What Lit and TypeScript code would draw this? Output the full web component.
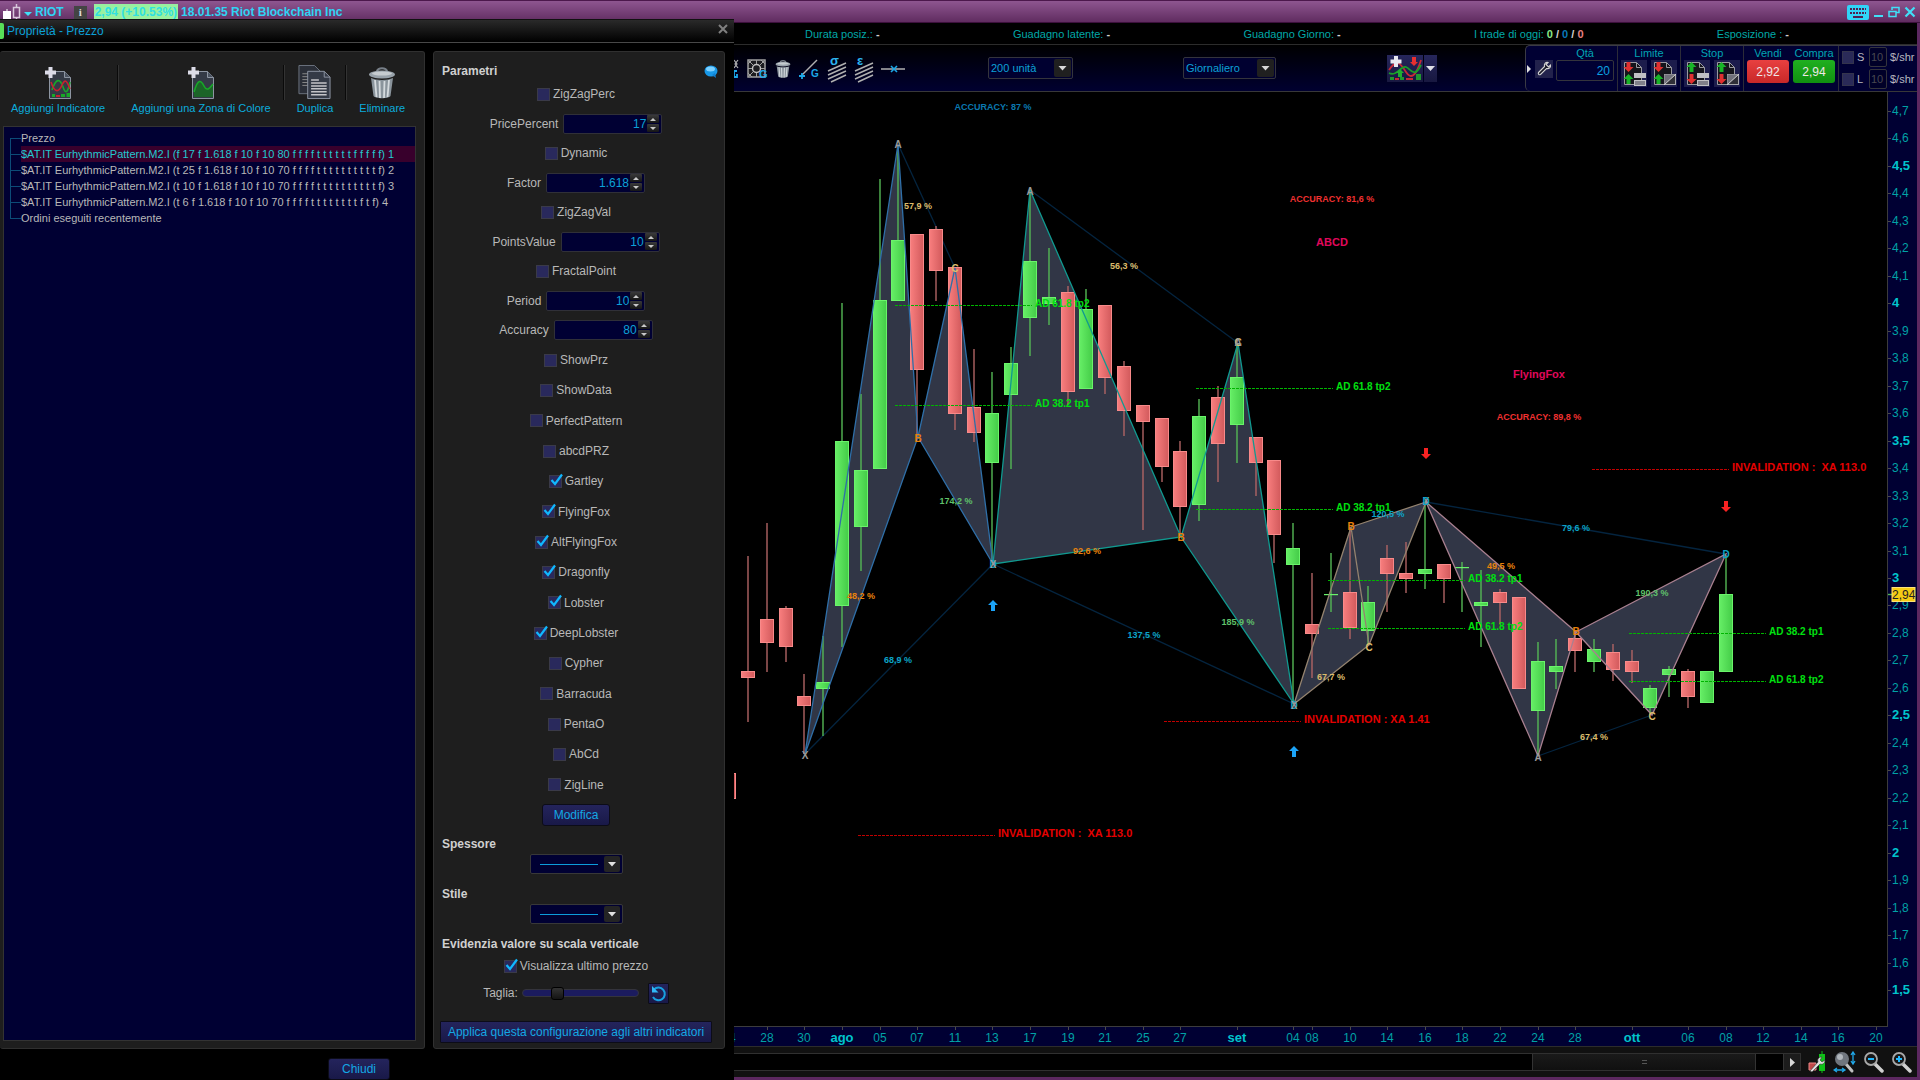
import { LitElement, html, svg, css, nothing } from "lit";
import { customElement, property } from "lit/decorators.js";

type Candle = [slot: number, open: "u" | "d", top: number, bottom: number, high: number, low: number];
type Pt = [number, number];

const FIRST_X = 842;
const PITCH = 18.8;
const slotX = (i: number) => Math.round(FIRST_X + i * PITCH);
const priceY = (p: number) => Math.round(111 + (4.7 - p) * 274.7);

const CANDLES: Candle[] = [
  [-6, "d", 773, 799, 773, 799], [-5, "d", 671, 678, 556, 722], [-4, "d", 619, 643, 523, 672],
  [-3, "d", 608, 647, 606, 662], [-2, "d", 696, 706, 674, 754], [-1, "u", 682, 689, 636, 736],
  [0, "u", 441, 606, 303, 647], [1, "u", 470, 527, 394, 571], [2, "u", 300, 469, 179, 469],
  [3, "u", 240, 301, 145, 301], [4, "d", 234, 370, 234, 437], [5, "d", 229, 271, 226, 301],
  [6, "d", 267, 414, 267, 430], [7, "d", 407, 433, 349, 442], [8, "u", 413, 463, 372, 562],
  [9, "u", 363, 395, 347, 469], [10, "u", 261, 318, 190, 356], [11, "u", 297, 304, 248, 325],
  [12, "d", 292, 392, 286, 405], [13, "u", 309, 389, 289, 389], [14, "d", 305, 378, 305, 394],
  [15, "d", 366, 411, 361, 436], [16, "d", 405, 422, 405, 530], [17, "d", 418, 467, 418, 482],
  [18, "d", 451, 507, 441, 537], [19, "u", 416, 505, 399, 521], [20, "d", 397, 444, 386, 482],
  [21, "u", 377, 425, 343, 463], [22, "d", 437, 463, 437, 496], [23, "d", 460, 535, 460, 563],
  [24, "u", 548, 565, 523, 704], [25, "d", 624, 634, 573, 678], [26, "u", 594, 595, 553, 612],
  [27, "d", 592, 628, 527, 639], [28, "u", 602, 631, 586, 645], [29, "d", 558, 574, 545, 612],
  [30, "d", 573, 579, 542, 593], [31, "u", 569, 574, 502, 589], [32, "d", 564, 579, 564, 603],
  [33, "u", 567, 568, 562, 612], [34, "u", 602, 606, 570, 647], [35, "d", 592, 603, 589, 624],
  [36, "d", 597, 689, 597, 689], [37, "u", 661, 711, 642, 756], [38, "u", 666, 672, 639, 689],
  [39, "d", 638, 651, 631, 672], [40, "u", 649, 662, 639, 672], [41, "d", 652, 670, 644, 681],
  [42, "d", 661, 672, 650, 683], [43, "u", 688, 708, 685, 715], [44, "u", 669, 675, 666, 697],
  [45, "d", 671, 697, 669, 708], [46, "u", 671, 703, 671, 703], [47, "u", 594, 672, 555, 672],
];

const PATTERNS: { cls: string; tris: Pt[][]; lines: Pt[][] }[] = [
  {
    cls: "blue",
    tris: [[[805, 754], [898, 144], [918, 437]], [[918, 437], [955, 268], [993, 564]]],
    lines: [[[805, 754], [898, 144], [918, 437], [805, 754]], [[918, 437], [955, 268], [993, 564], [918, 437]]],
  },
  {
    cls: "teal",
    tris: [[[993, 564], [1030, 190], [1181, 537]], [[1181, 537], [1238, 343], [1294, 704]]],
    lines: [[[993, 564], [1030, 190], [1181, 537], [993, 564]], [[1181, 537], [1238, 343], [1294, 704], [1181, 537]]],
  },
  {
    cls: "tan",
    tris: [[[1294, 704], [1351, 527], [1369, 645]], [[1351, 527], [1426, 502], [1369, 645]]],
    lines: [[[1294, 704], [1351, 527], [1369, 645], [1294, 704]], [[1351, 527], [1426, 502], [1369, 645]]],
  },
  {
    cls: "rose",
    tris: [[[1426, 502], [1538, 756], [1576, 632]], [[1576, 632], [1652, 715], [1726, 554]]],
    lines: [[[1426, 502], [1538, 756], [1576, 632], [1426, 502]], [[1576, 632], [1652, 715], [1726, 554], [1576, 632]]],
  },
];

const RATIOS: Pt[][] = [
  [[898, 144], [955, 268]], [[805, 754], [993, 564]], [[1030, 190], [1238, 343]],
  [[993, 564], [1294, 704]], [[1426, 502], [1726, 554]], [[1538, 756], [1652, 715]],
];

const NOTES: [string, number, number, string][] = [
  ["57,9 %", 918, 206, "sand"], ["56,3 %", 1124, 266, "sand"], ["174,2 %", 956, 501, "leaf"],
  ["48,2 %", 861, 596, "amber"], ["68,9 %", 898, 660, "cyan"], ["92,6 %", 1087, 551, "amber"],
  ["137,5 %", 1144, 635, "cyan"], ["185,9 %", 1238, 622, "leaf"], ["120,5 %", 1388, 514, "cyan"],
  ["67,7 %", 1331, 677, "sand"], ["79,6 %", 1576, 528, "cyan"], ["49,5 %", 1501, 566, "amber"],
  ["190,3 %", 1652, 593, "leaf"], ["67,4 %", 1594, 737, "sand"],
  ["ACCURACY: 87 %", 993, 107, "sea"], ["ACCURACY: 81,6 %", 1332, 199, "red"], ["ACCURACY: 89,8 %", 1539, 417, "red"],
];

const MARKS: [string, number, number, string][] = [
  ["A", 898, 144, "grey"], ["B", 918, 438, "amber"], ["C", 955, 268, "sand"], ["X", 805, 755, "grey"],
  ["D", 993, 564, "cyan"], ["X", 993, 564, "grey"], ["A", 1030, 191, "grey"], ["B", 1181, 537, "amber"],
  ["C", 1238, 342, "sand"], ["A", 1238, 342, "grey"], ["D", 1294, 705, "cyan"], ["X", 1294, 705, "grey"],
  ["B", 1351, 526, "amber"], ["C", 1369, 647, "sand"], ["X", 1426, 501, "grey"], ["D", 1426, 501, "cyan"],
  ["A", 1538, 757, "grey"], ["B", 1576, 631, "amber"], ["C", 1652, 716, "sand"], ["D", 1726, 554, "cyan"],
];

const LEVELS: [string, number, number, string][] = [
  ["AD 61.8 tp2", 895, 305, "target"], ["AD 38.2 tp1", 895, 405, "target"],
  ["AD 61.8 tp2", 1196, 388, "target"], ["AD 38.2 tp1", 1196, 509, "target"],
  ["AD 38.2 tp1", 1328, 580, "target"], ["AD 61.8 tp2", 1328, 628, "target"],
  ["AD 38.2 tp1", 1629, 633, "target"], ["AD 61.8 tp2", 1629, 681, "target"],
  ["INVALIDATION :\u00a0 XA 113.0", 1592, 469, "invalid"], ["INVALIDATION :\u00a0 XA 113.0", 858, 835, "invalid"],
  ["INVALIDATION : XA 1.41", 1164, 721, "invalid"],
];

const DATES: [string, number][] = [
  ["24", -6], ["28", -4], ["30", -2], ["ago", 0], ["05", 2], ["07", 4], ["11", 6], ["13", 8], ["17", 10], ["19", 12],
  ["21", 14], ["25", 16], ["27", 18], ["set", 21], ["04", 24], ["08", 25], ["10", 27], ["14", 29], ["16", 31],
  ["18", 33], ["22", 35], ["24", 37], ["28", 39], ["ott", 42], ["06", 45], ["08", 47], ["12", 49], ["14", 51],
  ["16", 53], ["20", 55],
];

const join = (p: Pt[]) => p.map((q) => q.join(",")).join(" ");

@customElement("price-chart")
class PriceChart extends LitElement {
  static styles = css`
    :host { display: block; background: #000; }
    .canvas { display: block; width: 100%; font-family: "Liberation Sans", Arial, sans-serif; }
    .axis { fill: #000033; }
    .edge { stroke: #3c3c3c; fill: none; shape-rendering: crispEdges; }
    .tick { stroke: #4a4a4a; shape-rendering: crispEdges; }
    .scale { fill: #00a2a6; font-size: 12px; }
    .scale-major { fill: #00c4cc; font-size: 13px; font-weight: 700; }
    .mid { text-anchor: middle; }
    .zone { fill: #313646; }
    .wick { stroke-width: 1.4; }
    .wick-u { stroke: #55b855; }
    .wick-d { stroke: #b06464; }
    .body-u { fill: url(#up); stroke: #6af46a; stroke-width: 1; }
    .body-d { fill: url(#down); stroke: #f88a8a; stroke-width: 1; }
    .leg { fill: none; stroke-width: 1.3; }
    .blue { stroke: #2f6fa8; }
    .teal { stroke: #109a90; }
    .tan { stroke: #94836f; }
    .rose { stroke: #a98090; }
    .ratio { stroke: #04243f; stroke-width: 1.3; }
    .note { font-size: 9px; font-weight: 700; text-anchor: middle; }
    .mark { font-size: 10px; font-weight: 700; text-anchor: middle; }
    .sand { fill: #dcbc6c; }
    .leaf { fill: #5fc06a; }
    .amber { fill: #e8820c; }
    .cyan { fill: #0ca4c8; }
    .sea { fill: #0a78b0; }
    .red { fill: #f03030; }
    .grey { fill: #9a9a9a; }
    .title { fill: #e0085c; font-size: 11px; font-weight: 700; text-anchor: middle; }
    .level { font-size: 10px; font-weight: 700; }
    .target { fill: #00e010; }
    .invalid { fill: #e40000; }
    .level.invalid { font-size: 11px; }
    .level-line { stroke-dasharray: 3 1; stroke-width: 1; shape-rendering: crispEdges; }
    .line-target { stroke: #00b400; }
    .line-invalid { stroke: #c00000; }
    .buy { fill: #1ca4f8; }
    .sell { fill: #f82222; }
    .tag { fill: #f6cc14; stroke: #fbe27a; }
    .tag-text { fill: #222; font-size: 12px; }
  `;

  private candle([i, dir, top, bottom, high, low]: Candle) {
    const x = slotX(i);
    return svg`<line class="wick wick-${dir}" x1=${x} x2=${x} y1=${high} y2=${low}></line>
      <rect class="body-${dir}" x=${x - 6.5} y=${top + 0.5} width="13" height=${Math.max(bottom - top - 1, 0.2)}></rect>`;
  }

  render() {
    const prices = Array.from({ length: 33 }, (_, n) => (47 - n) / 10);
    return html`<svg class="canvas" viewBox="734 92 1183 954" preserveAspectRatio="xMinYMin meet" role="img" aria-label="RIOT">
      <defs>
        <linearGradient id="up"><stop offset="0" stop-color="#66ee66"/><stop offset="1" stop-color="#44cc48"/></linearGradient>
        <linearGradient id="down"><stop offset="0" stop-color="#f87e7e"/><stop offset="1" stop-color="#d25a5c"/></linearGradient>
      </defs>
      ${PATTERNS.map((p) => p.tris.map((t) => svg`<polygon class="zone" points=${join(t)}></polygon>`))}
      ${RATIOS.map((r) => svg`<line class="ratio" x1=${r[0][0]} y1=${r[0][1]} x2=${r[1][0]} y2=${r[1][1]}></line>`)}
      ${CANDLES.map((c) => this.candle(c))}
      ${PATTERNS.map((p) => p.lines.map((l) => svg`<polyline class="leg ${p.cls}" points=${join(l)}></polyline>`))}
      ${LEVELS.map(([text, x, y, kind]) => svg`
        <line class="level-line line-${kind}" x1=${x} x2=${x + 137} y1=${y + 0.5} y2=${y + 0.5}></line>
        <text class="level ${kind}" x=${x + 140} y=${y + 2}>${text}</text>`)}
      ${NOTES.map(([text, x, y, c]) => svg`<text class="note ${c}" x=${x} y=${y + 3}>${text}</text>`)}
      ${MARKS.map(([text, x, y, c]) => svg`<text class="mark ${c}" x=${x} y=${y + 4}>${text}</text>`)}
      <text class="title" x="1332" y="246">ABCD</text>
      <text class="title" x="1539" y="378">FlyingFox</text>
      <path class="buy" d="M993 600l5 5h-3v6h-4v-6h-3z"/>
      <path class="buy" d="M1294 746l5 5h-3v6h-4v-6h-3z"/>
      <path class="sell" d="M1424 448h4v6h3l-5 5l-5-5h3z"/>
      <path class="sell" d="M1724 501h4v6h3l-5 5l-5-5h3z"/>
      <rect class="axis" x="1888" y="92" width="29" height="954"></rect>
      <rect class="axis" x="734" y="1027" width="1183" height="19"></rect>
      <path class="edge" d="M734 1026.5H1887.5V92"></path>
      ${prices.map((p) => {
        const y = priceY(p);
        const major = Number.isInteger(p * 2);
        return svg`<line class="tick" x1="1888" x2="1891" y1=${y} y2=${y}></line>
          <text class=${major ? "scale-major" : "scale"} x="1892" y=${y + 4}>${String(p).replace(".", ",")}</text>`;
      })}
      ${DATES.map(([d, i]) => svg`<line class="tick" x1=${slotX(i)} x2=${slotX(i)} y1="1027" y2="1030"></line>
        <text class="mid ${/\d/.test(d) ? "scale" : "scale-major"}" x=${slotX(i)} y="1042">${d}</text>`)}
      <line class="wick wick-u" x1="1888" x2="1892" y1="594.5" y2="594.5"></line>
      <rect class="tag" x="1892" y="587.5" width="23" height="14"></rect>
      <text class="tag-text" x="1892" y="599">2,94</text>
    </svg>`;
  }
}

const docIcon = (inner: unknown) => html`<svg class="ico" width="32" height="34" viewBox="0 0 32 34">
  <path d="M7.500 5.500h15l6 6v21h-21z" fill="#343a46" stroke="#8d95a2"/><path d="M22.500 5.500v6h6" fill="#4a525f" stroke="#8d95a2"/>
  ${inner}<path d="M6.500 1h4v3.500H14v4h-3.500V12h-4V8.500H3v-4h3.500z" fill="#dcdce8"/></svg>`;

const trashIcon = (w: number, h: number) => html`<svg width=${w} height=${h} viewBox="0 0 28 34">
  <path d="M9 6C9 1 19 1 19 6" fill="none" stroke="#777f88" stroke-width="2.200"/>
  <ellipse cx="14" cy="8.500" rx="13" ry="4" fill="#98a2aa"/><ellipse cx="14" cy="7.500" rx="10" ry="2" fill="#c6ccd0"/>
  <path d="M3 12l2.500 18c2 3 15 3 17 0L25 12c-5 2.500-17 2.500-22 0z" fill="#8a949c"/>
  <path d="M7 14l1.500 17M11.500 15l.5 17M16.500 15l-.5 17M21 14l-1.500 17" stroke="#d4dade" stroke-width="1.800"/></svg>`;

@customElement("props-dialog")
class PropsDialog extends LitElement {
  @property({ attribute: false }) selected = 1;

  static styles = css`
    :host { display: flex; flex-direction: column; background: #000; color: #b8b8b8; font: 12px/16px "Liberation Sans", Arial, sans-serif; }
    * { box-sizing: border-box; }
    button, input, select { font: inherit; margin: 0; }
    .caption { display: flex; align-items: center; height: 24px; background: linear-gradient(#2a2a2a, #000); border-top: 1px solid #111; border-bottom: 1px solid #484848; color: #0ca0d8; }
    .chip { width: 4px; height: 16px; background: #58e058; border-radius: 0 2px 2px 0; margin-right: 3px; }
    .name { flex: 1; font: inherit; margin: 0; }
    .close { background: none; border: 0; padding: 0; width: 22px; height: 20px; }
    .ico { display: block; }
    .panels { flex: 1; display: grid; grid-template-columns: 425px 292px; gap: 8px; padding: 8px 9px 0 0; min-height: 0; }
    .panel { background: #1e1e1e; border: 1px solid #303030; border-radius: 3px; display: flex; flex-direction: column; }
    .list-panel { border-left: 0; padding: 12px 8px 7px 3px; }
    .tools { display: flex; margin-bottom: 10px; padding-top: 1px; font-size: 11px; }
    .tool { display: flex; flex-direction: column; align-items: center; background: none; border: 0; color: #0cacdc; padding: 0 12px; line-height: 16px; white-space: nowrap; }
    .tool:first-child { padding-left: 8px; }
    .art { height: 35px; display: grid; place-items: center; }
    .rule { width: 2px; height: 35px; border-left: 1px solid #0a0a0a; border-right: 1px solid #333; flex: none; }
    .tree { flex: 1; margin: 0; padding: 3px 0; list-style: none; background: #000033; border: 1px solid #333; font-size: 11px; }
    .node { display: flex; height: 16px; padding-left: 6px; white-space: nowrap; }
    .node::before { content: ""; width: 11px; flex: none; background: linear-gradient(#0c4c78, #0c4c78) 0 8px / 11px 1px no-repeat, linear-gradient(#0c4c78, #0c4c78) 0 0 / 1px 100% no-repeat; }
    .node:first-child::before { background: linear-gradient(#0c4c78, #0c4c78) 0 8px / 11px 1px no-repeat, linear-gradient(#0c4c78, #0c4c78) 0 8px / 1px 8px no-repeat; }
    .node:last-child::before { background: linear-gradient(#0c4c78, #0c4c78) 0 8px / 11px 1px no-repeat, linear-gradient(#0c4c78, #0c4c78) 0 0 / 1px 8px no-repeat; }
    .node-text { flex: 1; }
    .node.on .node-text { background: #38002c; color: #24c8d0; }
    .form { padding: 11px 12px 5px 6px; }
    .head { display: flex; justify-content: space-between; align-items: center; height: 16px; margin: 0 -6px 0 0; padding: 0 0 0 2px; font-size: 12px; font-weight: 700; color: #d0d0d0; white-space: nowrap; }
    .row { display: flex; align-items: center; justify-content: center; height: 30px; gap: 3px; }
    .row.num { height: 29px; gap: 5px; }
    .options { flex: 1; display: grid; grid-auto-rows: 1fr; padding-top: 1px; }
    .options .row { height: auto; }
    .tickbox { display: grid; width: 13px; height: 13px; flex: none; }
    .tickbox > * { grid-area: 1 / 1; }
    .tickbox input { appearance: none; width: 13px; height: 13px; background: #29295c; border: 1px solid #3a3a48; }
    .tickmark { width: 15px; height: 13px; margin-top: -2px; pointer-events: none; overflow: visible; z-index: 1; }
    .spin { display: flex; align-items: center; width: 99px; height: 20px; background: #000033; border: 1px solid #303038; border-radius: 2px; padding-right: 2px; }
    .spin input { flex: 1; min-width: 0; background: none; border: 0; padding: 0; text-align: right; color: #0ca0d8; appearance: textfield; outline: none; }
    .spin input::-webkit-inner-spin-button { appearance: none; display: none; }
    .arrows { display: flex; flex-direction: column; gap: 1px; margin-left: 1px; }
    .step { display: grid; place-items: center; width: 12px; height: 8px; padding: 0; border: 0; border-radius: 1px; background: linear-gradient(#3a3a3a, #161616); }
    .btn { background: linear-gradient(#24245c, #191948); border: 1px solid #0c0c18; border-radius: 3px; color: #14a8e4; height: 22px; padding: 0 13px; line-height: 16px; white-space: nowrap; }
    .modify { align-self: center; margin: 4px 0 10px; padding: 0 11px; }
    .combo { align-self: center; display: grid; width: 93px; height: 20px; margin: 2px 0 12px; }
    .combo > * { grid-area: 1 / 1; }
    .combo select { appearance: none; background: #000033; border: 1px solid #383838; border-radius: 2px; color: transparent; width: 93px; height: 20px; padding: 0; }
    .combo svg { pointer-events: none; }
    .size { height: 22px; gap: 4px; margin: 8px 0 17px; }
    .check-last { height: 16px; margin-top: 6px; }
    .slider { appearance: none; width: 117px; height: 8px; background: #1b1b5e; border: 1px solid #34343c; border-radius: 4px; margin-right: 5px; }
    .slider::-webkit-slider-thumb { appearance: none; width: 13px; height: 13px; border: 1px solid #000; border-radius: 3px; background: linear-gradient(#333, #141414); }
    .reset { display: grid; place-items: center; width: 21px; height: 21px; padding: 0; border-radius: 1px; }
    .apply { align-self: stretch; padding: 0; border-radius: 1px; }
    .foot { display: flex; justify-content: center; padding: 9px 16px 0 0; }
  `;

  private check(name: string, on = false, cls = "row") {
    const id = "c-" + name.replace(/\s/g, "");
    return html`<div class=${cls}><span class="tickbox"><input type="checkbox" id=${id} .checked=${on}>${on
      ? html`<svg class="tickmark" viewBox="0 0 15 13"><path d="M2.500 7L6 11L13 1.500" fill="none" stroke="#10b8ff" stroke-width="2.200"/></svg>`
      : nothing}</span><label for=${id}>${name}</label></div>`;
  }

  private num(name: string, value: string) {
    return html`<div class="row num"><label for=${name}>${name}</label><span class="spin">
      <input type="number" step="any" id=${name} .value=${value}>
      <span class="arrows">
        <button class="step" type="button" aria-label="+"><svg width="6" height="3" viewBox="0 0 6 3"><path d="M3 0l3 3H0z" fill="#c8c8c8"/></svg></button>
        <button class="step" type="button" aria-label="-"><svg width="6" height="3" viewBox="0 0 6 3"><path d="M0 0h6L3 3z" fill="#c8c8c8"/></svg></button>
      </span></span></div>`;
  }

  private combo(id: string) {
    return html`<span class="combo"><select id=${id} aria-labelledby=${id + "-h"}><option value="1"></option></select>
      <svg width="93" height="20" viewBox="0 0 93 20"><rect x="74" y="2" width="16" height="16" rx="2" fill="#242424"/>
      <path d="M78 8h8l-4 4.500z" fill="#e0e0e0"/><path d="M10 10.500h58" stroke="#0c9cdc"/></svg></span>`;
  }

  render() {
    const nodes = [
      "Prezzo",
      "$AT.IT EurhythmicPattern.M2.I (f 17 f 1.618 f 10 f 10 80 f f f f t t t t t t f f f f f) 1",
      "$AT.IT EurhythmicPattern.M2.I (t 25 f 1.618 f 10 f 10 70 f f f f t t t t t t t t t t f) 2",
      "$AT.IT EurhythmicPattern.M2.I (t 10 f 1.618 f 10 f 10 70 f f f f t t t t t t t t t t f) 3",
      "$AT.IT EurhythmicPattern.M2.I (t 6 f 1.618 f 10 f 10 70 f f f f t t t t t t t t f t f) 4",
      "Ordini eseguiti recentemente",
    ];
    const options: [string, boolean][] = [
      ["ShowPrz", false], ["ShowData", false], ["PerfectPattern", false], ["abcdPRZ", false], ["Gartley", true],
      ["FlyingFox", true], ["AltFlyingFox", true], ["Dragonfly", true], ["Lobster", true], ["DeepLobster", true],
      ["Cypher", false], ["Barracuda", false], ["PentaO", false], ["AbCd", false], ["ZigLine", false],
    ];
    return html`
      <header class="caption"><span class="chip"></span><h2 class="name">Proprietà - Prezzo</h2>
        <button class="close" aria-label="Chiudi finestra"><svg width="12" height="12" viewBox="0 0 12 12"><path d="M2 2l8 8M10 2l-8 8" stroke="#808080" stroke-width="2"/></svg></button>
      </header>
      <div class="panels">
        <section class="panel list-panel">
          <div class="tools">
            <button class="tool"><span class="art">${docIcon(svg`<path d="M10 24c4-12 8-12 11-3s5 4 7-5" fill="none" stroke="#18a828" stroke-width="1.600"/><path d="M9 16c4 12 8 10 11 3s5-4 8 4" fill="none" stroke="#c82030" stroke-width="1.600"/><path d="M10 28h3v3h-3zM19 28h4v3h-4zM24.500 27H28v4h-3.500z" fill="#18a828"/><path d="M14 29h4v2h-4z" fill="#c82030"/>`)}</span>Aggiungi Indicatore</button>
            <span class="rule"></span>
            <button class="tool"><span class="art">${docIcon(svg`<path d="M9 26c4-14 7-12 10-6s6 2 9-2v13H9z" fill="#1c6428"/><path d="M9 26c4-14 7-12 10-6s6 2 9-2" fill="none" stroke="#18a828" stroke-width="1.600"/>`)}</span>Aggiungi una Zona di Colore</button>
            <span class="rule"></span>
            <button class="tool"><span class="art"><svg width="35" height="35" viewBox="0 0 35 36"><path d="M1.500.5h16l6 6v23h-22z" fill="#2b2f38" stroke="#6c747f"/><path d="M5 9h8M5 12h8M5 15h8M5 18h8M5 21h8" stroke="#888"/><path d="M10.500 6.500h17l6 6v22h-23z" fill="#343a46" stroke="#8d95a2"/><path d="M27.500 6.500v6h6" fill="none" stroke="#8d95a2"/><path d="M14 15.500h8M14 18.500h16M14 21.500h16M14 24.500h16M14 27.500h16M14 30.500h16" stroke="#c4c4c8" stroke-width="1.500"/></svg></span>Duplica</button>
            <span class="rule"></span>
            <button class="tool"><span class="art">${trashIcon(28, 34)}</span>Eliminare</button>
          </div>
          <ul class="tree">${nodes.map((n, i) => html`<li class="node ${i === this.selected ? "on" : ""}"><span class="node-text">${n}</span></li>`)}</ul>
        </section>
        <section class="panel form">
          <h3 class="head">Parametri<svg width="14" height="13" viewBox="0 0 14 13"><ellipse cx="7" cy="6" rx="6.500" ry="5.500" fill="#1898e8"/><ellipse cx="6.500" cy="4" rx="4.500" ry="2.500" fill="#7cd0ff"/><path d="M8 10l4 3-1-5z" fill="#1080d0"/></svg></h3>
          ${this.check("ZigZagPerc")}${this.num("PricePercent", "17")}${this.check("Dynamic")}${this.num("Factor", "1.618")}
          ${this.check("ZigZagVal")}${this.num("PointsValue", "10")}${this.check("FractalPoint")}${this.num("Period", "10")}${this.num("Accuracy", "80")}
          <div class="options">${options.map(([n, on]) => this.check(n, on))}</div>
          <button class="btn modify">Modifica</button>
          <h3 class="head" id="spessore-h">Spessore</h3>${this.combo("spessore")}
          <h3 class="head" id="stile-h">Stile</h3>${this.combo("stile")}
          <h3 class="head">Evidenzia valore su scala verticale</h3>
          ${this.check("Visualizza ultimo prezzo", true, "row check-last")}
          <div class="row size"><label for="taglia">Taglia:</label><input class="slider" type="range" id="taglia" min="0" max="100" .value=${"28"}>
            <button class="btn reset" aria-label="Ripristina"><svg width="17" height="17" viewBox="0 0 17 17"><path d="M4 4.500A6.300 6.300 0 1 1 3 12" fill="none" stroke="#18a0e0" stroke-width="2"/><path d="M2 1v6.500h6.500z" fill="#30b8f8"/></svg></button></div>
          <button class="btn apply">Applica questa configurazione agli altri indicatori</button>
        </section>
      </div>
      <div class="foot"><button class="btn">Chiudi</button></div>`;
  }
}

const orderIcon = (upFirst: boolean, slash: boolean) => {
  const up = (y: number, c: string) => svg`<path d="M7.500 ${y}l5 5h-3v5h-4v-5h-3z" fill=${c}/>`;
  const down = (y: number, c: string) => svg`<path d="M5.500 ${y}h4v5h3l-5 5l-5-5h3z" fill=${c}/>`;
  return html`<svg width="26" height="27" viewBox="0 0 26 27"><path d="M3.500 2.500h12l5 5v17h-17z" fill="#15151c" stroke="#9a9aa0"/><path d="M15.500 2.500v5h5" fill="none" stroke="#9a9aa0"/>
    ${upFirst ? up(2, "#18b428") : down(2, "#e03030")}${upFirst ? down(14, "#e03030") : up(14, "#18b428")}
    ${slash ? svg`<rect x="13.500" y="14.500" width="11" height="10" fill="#303038" stroke="#a8a8ac"/><path d="M13.500 24.500V14.500H24.500z" fill="#70707a"/><path d="M13 25L25 14" stroke="#d0d0d0"/>`
      : svg`<rect x="13" y="13" width="12" height="5" fill="#c0c0c4"/><rect x="13.500" y="20.500" width="11" height="5" fill="#80808a" stroke="#c0c0c4"/>`}</svg>`;
};

@customElement("app-root")
class AppRoot extends LitElement {
  static styles = css`
    :host { display: block; background: #000; font: 11px/16px "Liberation Sans", Arial, sans-serif; color: #00a8a8; }
    * { box-sizing: border-box; }
    button, input, select { font: inherit; margin: 0; }
    .shell { display: grid; grid-template: 23px 1fr / 734px 1fr; min-height: 100vh; }
    .bar { grid-column: 1 / 3; display: flex; align-items: center; background: linear-gradient(#4c184c 0 1px, #8e5690 1px, #602c60 22px, #3c103c 22px); color: #30d4f4; font-size: 12px; font-weight: 700; padding: 2px 4px 1px 3px; white-space: nowrap; }
    .bar svg { display: block; }
    .ticker { margin: 0 10px 0 1px; font: inherit; }
    .info { display: grid; place-items: center; width: 13px; height: 13px; padding: 0; border: 0; background: #444; color: #ddd; font: 700 11px/13px "Liberation Serif", serif; margin-right: 7px; }
    .change { background: #98f0a0; color: #30e0e0; line-height: 16px; padding: 0 1px; margin-right: 3px; }
    .win { display: flex; align-items: center; gap: 4px; margin-left: auto; }
    .wbtn { background: none; border: 0; padding: 0; display: block; }
    .dialog { margin-top: -4px; z-index: 1; }
    .main { display: flex; flex-direction: column; min-width: 0; border-right: 3px solid #5c2860; border-bottom: 3px solid #5c2860; }
    .stats { display: flex; justify-content: space-between; align-items: center; height: 22px; padding: 0 128px 0 71px; white-space: nowrap; border-bottom: 1px solid #2c2c2c; }
    .value { color: #d0d0d0; font-weight: 700; }
    .green { color: #88e888; font-weight: 700; } .blue { color: #0878b8; font-weight: 700; } .pink { color: #e88080; font-weight: 700; }
    .toolbar { display: flex; height: 47px; border-bottom: 1px solid #383838; background: linear-gradient(#000, #000030); align-items: center; }
    .draw { display: flex; align-items: center; gap: 7px; width: 254px; flex: none; padding-top: 1px; }
    .draw button { background: none; border: 0; padding: 0; display: block; flex: none; }
    .draw svg { display: block; }
    .draw .hatch { overflow: visible; }
    .combo { display: grid; align-items: center; justify-items: end; height: 22px; flex: none; }
    .combo > * { grid-area: 1 / 1; }
    .combo select { appearance: none; width: 100%; height: 22px; background: #000030; border: 1px solid #34343c; border-radius: 2px; color: #0ca0d8; padding: 0 22px 0 2px; }
    .combo svg { pointer-events: none; margin-right: 2px; }
    .units { width: 85px; margin-right: 110px; }
    .frame { width: 93px; }
    .study { display: flex; margin: 0 88px 0 auto; gap: 1px; }
    .study button { display: grid; place-items: center; height: 27px; padding: 0; border: 0; background: linear-gradient(#26265c, #181840); }
    .study button:first-child { width: 36px; } .study button:last-child { width: 13px; }
    .trade { display: flex; flex: none; height: 46px; width: 392px; background: #000033; border: 1px solid #3a3a44; border-right: 0; border-bottom: 0; border-radius: 5px 0 0 5px; color: #00a4b4; }
    .cell { display: flex; flex-direction: column; align-items: center; line-height: 14px; padding: 0 3px; white-space: nowrap; }
    .cell + .cell { border-left: 1px solid #2c2c38; }
    .pair { display: flex; gap: 4px; }
    .order { background: #1c1c4c; border: 0; padding: 0; height: 27px; width: 26px; }
    .order svg { display: block; }
    .lead { display: flex; align-items: center; gap: 4px; padding: 0 0 0 1px; }
    .wrench { width: 18px; height: 18px; padding: 0; border: 0; background: #22224c; display: grid; place-items: center; }
    .qty { width: 58px; height: 21px; background: #000033; border: 1px solid #34343c; border-radius: 2px; color: #0ca0e0; text-align: right; padding: 0 3px; font-size: 12px; }
    .deal { display: flex; flex-direction: column; align-items: center; width: 42px; }
    .price { width: 42px; height: 23px; border: 0; border-radius: 3px; color: #f0e8e8; padding: 0; font-size: 12px; }
    .sell { background: linear-gradient(#e84040, #c82828); } .buy { background: linear-gradient(#20b020, #109010); }
    .guards { display: flex; flex-direction: column; gap: 2px; padding: 1px 0 0 3px; color: #b8b8c0; border-left: 1px solid #2c2c38; }
    .guard { display: flex; align-items: center; height: 20px; gap: 3px; white-space: nowrap; }
    .guard input[type="checkbox"] { appearance: none; width: 12px; height: 13px; background: #2a2a58; border: 1px solid #34344c; }
    .guard label { width: 9px; }
    .guard input[type="text"] { width: 18px; height: 20px; background: #000028; border: 1px solid #34343c; border-radius: 2px; color: #484850; padding: 0 1px; }
    .foot { display: flex; align-items: center; flex: 1; min-height: 31px; background: #111; border-top: 1px solid #2c2c2c; padding: 0 5px 0 0; gap: 7px; }
    .scroll { flex: 1; display: flex; height: 18px; background: #000; border: 1px solid #303030; border-left: 0; }
    .thumb { width: 224px; margin-left: auto; margin-right: 27px; background: linear-gradient(#1a1a1a, #101010); border: 1px solid #333; border-width: 0 1px; display: grid; place-items: center; }
    .next { width: 17px; padding: 0; border: 0; border-left: 1px solid #333; background: #1c1c1c; display: grid; place-items: center; }
    .zoom { background: none; border: 0; padding: 0; display: block; }
    .zoom svg { display: block; }
  `;

  private arrow() {
    return html`<svg width="17" height="18" viewBox="0 0 17 18"><rect width="17" height="18" rx="2" fill="#202020"/><path d="M4.500 7h8L8.500 11.500z" fill="#d8d8d8"/></svg>`;
  }

  private hatch(sign: string) {
    return html`<svg class="hatch" width="20" height="26" viewBox="0 0 20 26"><text x="3" y="9" fill="#2cb4f0" font-size="13" font-weight="700">${sign}</text><path d="M1 15l18-8M1 19l18-8M1 23l18-8M4 26l15-7" stroke="#b0b0b0" stroke-width="1.500"/></svg>`;
  }

  private lens(inner: unknown) {
    return html`<button class="zoom" aria-label="Zoom"><svg width="21" height="22" viewBox="0 0 21 22"><path d="M12 13l7 7" stroke="#d0d0d0" stroke-width="3.500" stroke-linecap="round"/><circle cx="8" cy="8" r="6" fill="#181818" stroke="#a8a8a8" stroke-width="1.800"/>${inner}</svg></button>`;
  }

  render() {
    return html`<div class="shell">
      <header class="bar">
        <svg width="31" height="18" viewBox="0 0 31 18"><path d="M0 8h8v8H0zM3.500 6h1v12h-1z" fill="#fff"/><path d="M10.500 4.500h6v10h-6zM13.500 1v3M13.500 15v3" fill="none" stroke="#d8c8dc" stroke-width="1.500"/><path d="M21 9h8l-4 4z" fill="#40e0f8"/></svg>
        <h1 class="ticker">RIOT</h1><button class="info" aria-label="Info">i</button>
        <span class="change">2,94 (+10.53%)</span><span>18.01.35 Riot Blockchain Inc</span>
        <div class="win">
          <button class="wbtn" aria-label="Tastiera"><svg width="22" height="15" viewBox="0 0 22 15"><rect width="22" height="15" rx="2" fill="#30d4f8"/><path d="M3 4h16M3 8h16" stroke="#502050" stroke-width="2" stroke-dasharray="2 1"/><path d="M6 12h10" stroke="#502050" stroke-width="2"/></svg></button>
          <button class="wbtn" aria-label="Riduci"><svg width="11" height="14" viewBox="0 0 11 14"><path d="M1 11h9" stroke="#40e0f8" stroke-width="2"/></svg></button>
          <button class="wbtn" aria-label="Ripristina"><svg width="12" height="12" viewBox="0 0 12 12"><path d="M4 4V1.500h7v5H8M1 5.500h7v5H1z" fill="none" stroke="#40e0f8" stroke-width="1.500"/></svg></button>
          <button class="wbtn" aria-label="Chiudi"><svg width="12" height="12" viewBox="0 0 12 12"><path d="M1.500 1.500l9 9M10.500 1.500l-9 9" stroke="#40e0f8" stroke-width="2.200"/></svg></button>
        </div>
      </header>
      <props-dialog class="dialog"></props-dialog>
      <main class="main">
        <div class="stats">
          <span>Durata posiz.: <b class="value">-</b></span><span>Guadagno latente: <b class="value">-</b></span>
          <span>Guadagno Giorno: <b class="value">-</b></span>
          <span>I trade di oggi: <b class="green">0</b> <b class="value">/</b> <b class="blue">0</b> <b class="value">/</b> <b class="pink">0</b></span>
          <span>Esposizione : <b class="value">-</b></span>
        </div>
        <div class="toolbar">
          <div class="draw">
            <button aria-label="Griglia"><svg width="5" height="20" viewBox="0 0 5 20"><path d="M0 1l3 4-3 4M4 1L1 5l3 4" fill="none" stroke="#b0b0b0" stroke-width="1.200"/><path d="M3 12H0v6h3v-3" fill="none" stroke="#1ca8e8" stroke-width="1.800"/></svg></button>
            <button aria-label="Gann"><svg width="22" height="22" viewBox="0 0 22 22"><path d="M2 2h17v17H2z" fill="#1c1c20" stroke="#a0a0a0" stroke-width="1.500"/><circle cx="10.500" cy="10.500" r="4" fill="none" stroke="#c0c0c0" stroke-width="1.500"/><path d="M3 3l4 4M18 3l-4 4M3 18l4-4M10.500 2v4M2 10.500h4M15 10.500h4M10.500 15v4M6 2L2 6M15 2l4 4M2 15l4 4" stroke="#a0a0a0"/><text x="13" y="20" fill="#1ca8e8" font-size="11" font-weight="700">G</text></svg></button>
            <button aria-label="Elimina">${trashIcon(16, 20)}</button>
            <button aria-label="Linea G"><svg width="22" height="22" viewBox="0 0 22 22"><path d="M3 18L19 2" stroke="#b0b0b0" stroke-width="1.500"/><path d="M1 18h6M4 15v6" stroke="#1ca8e8" stroke-width="1.800"/><text x="13" y="19" fill="#1ca8e8" font-size="10" font-weight="700">G</text></svg></button>
            <button aria-label="Sigma">${this.hatch("σ")}</button>
            <button aria-label="Epsilon">${this.hatch("ε")}</button>
            <button aria-label="Segmento"><svg width="24" height="10" viewBox="0 0 24 10"><path d="M0 5h24" stroke="#b0b0b0" stroke-width="1.500"/><path d="M10 2l6 6M16 2l-6 6" stroke="#1ca8e8" stroke-width="1.600"/></svg></button>
          </div>
          <span class="combo units"><select aria-label="Unità"><option>200 unità</option></select>${this.arrow()}</span>
          <span class="combo frame"><select aria-label="Periodo"><option>Giornaliero</option></select>${this.arrow()}</span>
          <div class="study">
            <button aria-label="Aggiungi indicatore"><svg width="34" height="26" viewBox="0 0 34 26"><path d="M1 15c8-12 12-6 17 2s10 4 15-12" fill="none" stroke="#c82838" stroke-width="1.800"/><path d="M1 18c8 4 12-8 17-6s8 12 15-2" fill="none" stroke="#18a028" stroke-width="1.800"/><path d="M6 1h4v3.500h3.500v4H10V12H6V8.500H2.500v-4H6z" fill="#e8e8f0"/><path d="M12 14l4 4h-2v4h-4v-4H8z" fill="#20b030"/><path d="M24 2h4v5h2l-4 4-4-4h2z" fill="#e83030"/><path d="M2 22h4v3H2zM12 22h4v3h-4zM28 19h5v6h-5z" fill="#209830"/><path d="M7 23h4v2H7zM18 23h7v2h-7z" fill="#c82838"/></svg></button>
            <button aria-label="Altri indicatori"><svg width="9" height="5" viewBox="0 0 9 5"><path d="M0 0h9L4.500 5z" fill="#e0e0e8"/></svg></button>
          </div>
          <div class="trade">
            <div class="lead"><svg width="4" height="8" viewBox="0 0 4 8"><path d="M0 0l4 4-4 4z" fill="#e0e0e0"/></svg>
              <button class="wrench" aria-label="Impostazioni"><svg width="15" height="15" viewBox="0 0 15 15"><path d="M1.500 11.500l6-6c-.7-2.500 1-4.500 3.500-4L9 3.500 11.500 6l2-2c.5 2.500-1.500 4.200-4 3.500l-6 6c-1.500.7-2.700-.5-2-2z" fill="#181828" stroke="#d4d4d4" stroke-width="1.100"/></svg></button></div>
            <div class="cell"><label for="qty">Qtà</label><input class="qty" id="qty" type="text" .value=${"20"}></div>
            <div class="cell">Limite<div class="pair"><button class="order" aria-label="Limite">${orderIcon(false, false)}</button><button class="order" aria-label="Limite condizionato">${orderIcon(false, true)}</button></div></div>
            <div class="cell">Stop<div class="pair"><button class="order" aria-label="Stop">${orderIcon(true, false)}</button><button class="order" aria-label="Stop condizionato">${orderIcon(true, true)}</button></div></div>
            <div class="cell"><div class="pair"><div class="deal">Vendi<button class="price sell">2,92</button></div><div class="deal">Compra<button class="price buy">2,94</button></div></div></div>
            <div class="guards">
              <div class="guard"><input type="checkbox" id="s"><label for="s">S</label><input type="text" aria-label="S $/shr" .value=${"10"}>$/shr</div>
              <div class="guard"><input type="checkbox" id="l"><label for="l">L</label><input type="text" aria-label="L $/shr" .value=${"10"}>$/shr</div>
            </div>
          </div>
        </div>
        <price-chart></price-chart>
        <div class="foot">
          <div class="scroll"><div class="thumb"><svg width="5" height="4" viewBox="0 0 5 4"><path d="M0 .5h5M0 3.500h5" stroke="#555"/></svg></div>
            <button class="next" aria-label="Avanti"><svg width="5" height="9" viewBox="0 0 5 9"><path d="M0 0l5 4.500L0 9z" fill="#d8d8d8"/></svg></button></div>
          <button class="zoom" aria-label="Stile"><svg width="18" height="22" viewBox="0 0 18 22"><path d="M1 12h7v7H1z" fill="#c04848" stroke="#e88"/><path d="M11 3h6v17h-6zM13.500 0h1v22h-1z" fill="#10c018"/><path d="M2 20l8-9c-1-3 1-5 4-5l-2 3 2 2 3-2c0 3-2 5-5 4l-8 8z" fill="#e0e0e0" stroke="#333" stroke-width=".6"/></svg></button>
          <button class="zoom" aria-label="Adatta"><svg width="23" height="23" viewBox="0 0 23 23"><path d="M13 13l6 7" stroke="#c0c0c0" stroke-width="3" stroke-linecap="round"/><circle cx="9" cy="8" r="7" fill="#70767e"/><circle cx="7" cy="6" r="3" fill="#b0b6bc"/><path d="M20 2v10M18 4l2-3 2 3M18 10l2 3 2-3M2 19h9M4 17l-3 2 3 2M9 17l3 2-3 2" fill="none" stroke="#20a8e8" stroke-width="1.300"/></svg></button>
          ${this.lens(svg`<path d="M5 8h6" stroke="#20b8ff" stroke-width="2"/>`)}
          ${this.lens(svg`<path d="M5 8h6M8 5v6" stroke="#20b8ff" stroke-width="2"/>`)}
        </div>
      </main>
    </div>`;
  }
}
